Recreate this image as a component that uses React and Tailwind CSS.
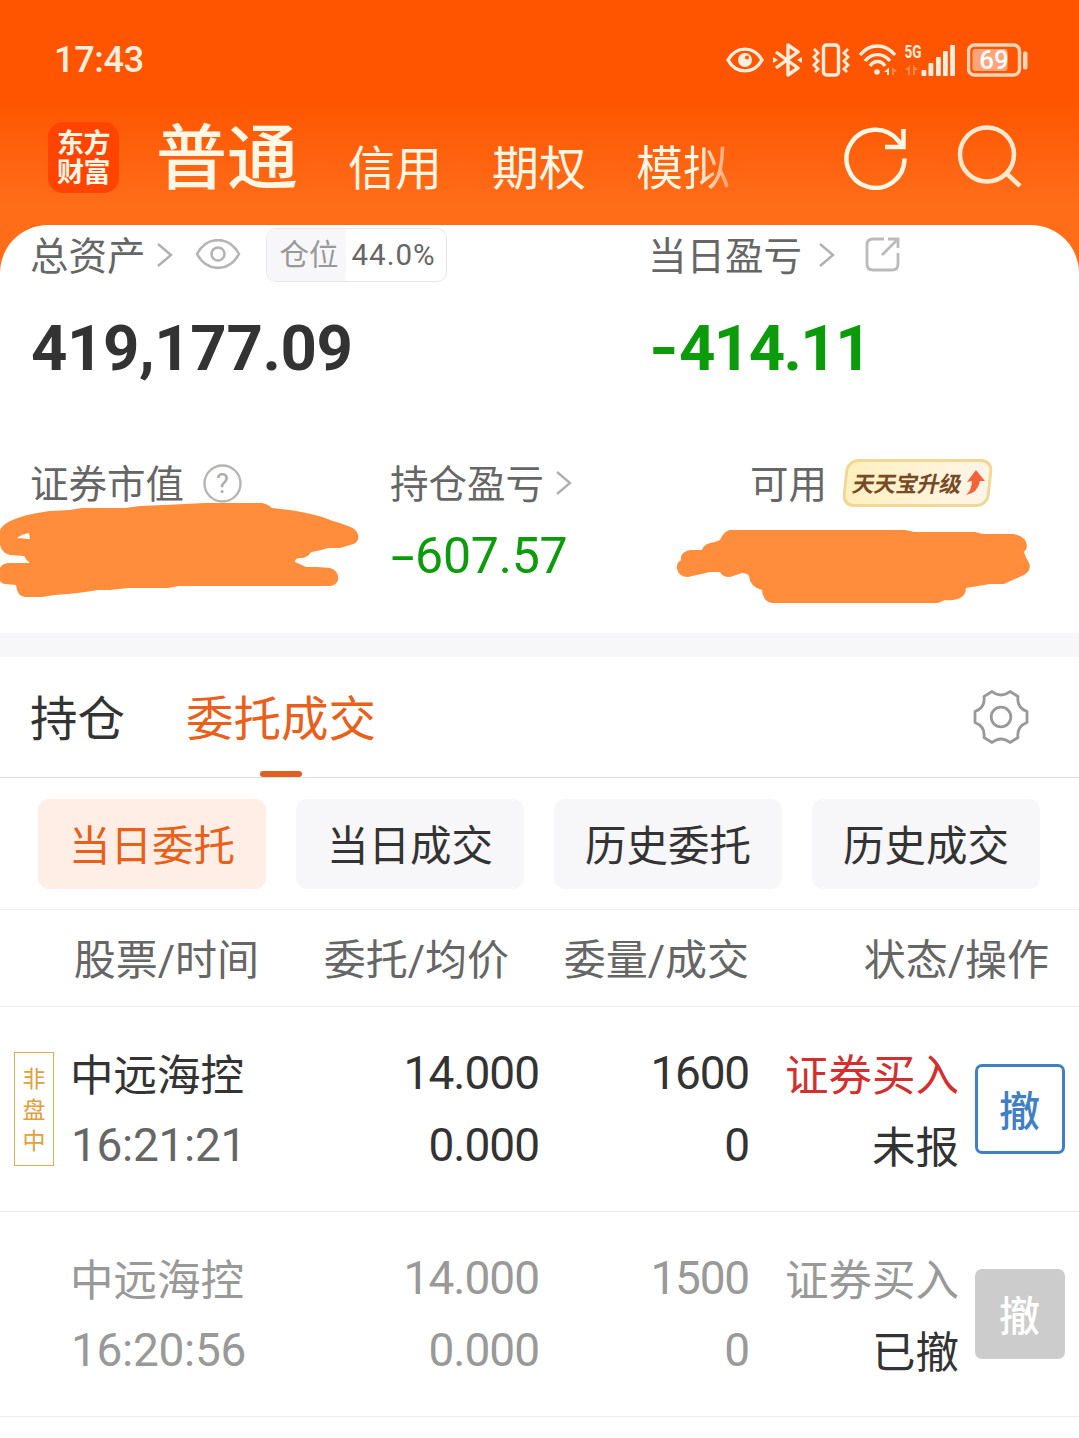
import { useState } from 'react';
import clsx from 'clsx';

const chips = ['当日委托', '当日成交', '历史委托', '历史成交'];

const orders = [
  {
    id: 1,
    tag: '非盘中',
    name: '中远海控',
    time: '16:21:21',
    price: '14.000',
    avg: '0.000',
    amount: '1600',
    filled: '0',
    side: '证券买入',
    status: '未报',
    active: true,
  },
  {
    id: 2,
    name: '中远海控',
    time: '16:20:56',
    price: '14.000',
    avg: '0.000',
    amount: '1500',
    filled: '0',
    side: '证券买入',
    status: '已撤',
    active: false,
  },
];

function Chevron() {
  return (
    <svg width="18" height="26" viewBox="0 0 18 26" fill="none" stroke="#b0b0b0" strokeWidth="2.4">
      <path d="M1 2 L14 13 L1 24" />
    </svg>
  );
}

function StatusBar() {
  return (
    <div className="flex h-[120px] items-center justify-between pl-[54px] pr-[51px] text-[#ffeede]">
      <span className="text-[36px] font-medium leading-none tracking-[-0.300px]">17:43</span>
      <div className="flex items-center">
        {/* eye */}
        <svg width="38" height="26" viewBox="0 0 38 26">
          <path d="M2 13 C10 -1.5 28 -1.5 36 13 C28 27.500 10 27.500 2 13Z" fill="none" stroke="currentColor" strokeWidth="3.400" />
          <circle cx="19" cy="13" r="7" fill="currentColor" />
          <circle cx="21" cy="10.500" r="2" fill="#ff5500" />
        </svg>
        {/* bluetooth */}
        <svg className="ml-[9px]" width="30" height="34" viewBox="0 0 30 34" fill="none" stroke="currentColor" strokeWidth="3.400" strokeLinejoin="round">
          <path d="M3 9 L25 25 L15 32 L15 2 L25 9 L3 25" />
          <path d="M0 14 L5 17 L0 20Z M29 14 L24 17 L29 20Z" fill="currentColor" stroke="none" />
        </svg>
        {/* vibrate */}
        <svg className="ml-[9px]" width="38" height="34" viewBox="0 0 38 34" fill="none" stroke="currentColor" strokeWidth="3.400">
          <rect x="11.500" y="2" width="15" height="30" rx="3" />
          <path d="M2 6 L6 10 L2 14 L6 18 L2 22 L6 26 L3 29 M36 6 L32 10 L36 14 L32 18 L36 22 L32 26 L35 29" strokeWidth="2.8" />
        </svg>
        {/* wifi */}
        <svg className="ml-[9px]" width="40" height="32" viewBox="0 0 40 32" fill="none" stroke="currentColor" strokeWidth="3.400">
          <path d="M1 11 C11 -1 26 -1 36 11" />
          <path d="M6 17 C13 8.500 24 8.500 31 17" />
          <path d="M11 22 C15 16 22 16 26 22" />
          <circle cx="18" cy="28" r="2.800" fill="currentColor" stroke="none" />
          <path d="M25 28 L30 23.500 V31 H28 V28Z" fill="currentColor" stroke="none" />
          <path d="M38 27 L33 23.500 V31 H35 V28Z" fill="currentColor" stroke="none" opacity=".35" />
        </svg>
        {/* signal */}
        <svg className="-mt-[6px] ml-[5px]" width="52" height="40" viewBox="0 -6 52 40" fill="currentColor">
          <text x="0.500" y="15" fontSize="18" fontWeight="700" textLength="17" lengthAdjust="spacingAndGlyphs">5G</text>
          <path d="M1 27 L6 22 V32 H4 V27Z M14 27 L9 22 V32 H11 V27Z" opacity=".35" />
          <rect x="17.500" y="27" width="4.800" height="6" rx="1" />
          <rect x="24.500" y="20" width="4.800" height="13" rx="1" />
          <rect x="32" y="14" width="4.800" height="19" rx="1" />
          <rect x="39" y="8" width="4.800" height="25" rx="1" />
          <rect x="46.200" y="2" width="4.800" height="31" rx="1" />
        </svg>
        {/* battery */}
        <svg className="ml-[11px]" width="61" height="34" viewBox="0 0 61 34">
          <rect x="1.500" y="2" width="51" height="30" rx="6" fill="none" stroke="#ffd5b8" strokeWidth="3.400" />
          <rect x="5.500" y="6" width="35" height="22" rx="3" fill="#ffa37a" />
          <rect x="56" y="8.500" width="4.500" height="18" rx="2" fill="#ffd5b8" />
          <text x="27" y="25.500" fontSize="26" fontWeight="500" textAnchor="middle" fill="#fff">69</text>
        </svg>
      </div>
    </div>
  );
}

function Header() {
  return (
    <header className="h-[285px] bg-[linear-gradient(#ff5500_0px,#ff5500_100px,#ff6d19_205px,#ff6d19_285px)]">
      <StatusBar />
      <div className="flex h-[76px] items-start pl-[48px] text-[#fff6e6]">
        <div className="mt-[2px] h-[71px] w-[71px] rounded-[15px] bg-[#ff4400] pt-[8px] text-center text-[27px] font-bold leading-[29px] tracking-[-0.500px]">
          东方
          <br />
          财富
        </div>
        <span className="ml-[37px] mt-[3px] text-[71px] font-medium leading-[71px]">普通</span>
        <nav className="ml-[50px] mt-[25px] flex gap-[50px] text-[47px] leading-[47px]">
          <span>信用</span>
          <span>期权</span>
          <span className="bg-linear-to-r from-[#fff6e6] from-65% to-[#ff9d64] bg-clip-text text-transparent">模拟</span>
        </nav>
        <svg className="ml-[114px] mt-[6px]" width="64" height="64" viewBox="0 0 64 64" fill="none" stroke="currentColor" strokeWidth="4.500">
          <path d="M60.500 32.500 A29 29 0 1 1 54 14.500 L59 20.500" />
          <path d="M59.500 3 V21 H41" />
        </svg>
        <svg className="ml-[49px] mt-[4px] text-[#ffe8d0]" width="66" height="66" viewBox="0 0 66 66" fill="none" stroke="currentColor" strokeWidth="4.500">
          <circle cx="30" cy="30.500" r="27" />
          <path d="M49 49 L63 62" />
        </svg>
      </div>
    </header>
  );
}

function Summary() {
  return (
    <section className="relative -mt-[60px] h-[408px] rounded-t-[48px] bg-white text-[#666]">
      <div className="flex h-[60px] items-center">
        <div className="flex w-[648px] items-center pl-[30px]">
          <span className="pt-[5px] text-[38.5px] leading-none">总资产</span>
          <span className="ml-[11px]"><Chevron /></span>
          <svg className="ml-[20px]" width="46" height="32" viewBox="0 0 46 32" fill="none" stroke="#b5b5b5" strokeWidth="2.600">
            <path d="M2 15 C12 -3.500 34 -3.500 44 15 C34 33.500 12 33.500 2 15Z" />
            <circle cx="23" cy="15" r="6.500" />
          </svg>
          <div className="ml-[25px] flex h-[54px] w-[181px] overflow-hidden rounded-[10px] border border-[#e8e8ec] text-[29.5px] leading-[52px]">
            <span className="w-[79px] bg-[#f7f7fa] pl-[13px] text-[#999]">仓位</span>
            <span className="pl-[6px] tracking-[1px]">44.0%</span>
          </div>
        </div>
        <span className="pt-[5px] text-[38.5px] leading-none">当日盈亏</span>
        <span className="ml-[17px]"><Chevron /></span>
        <svg className="ml-[28px]" width="36" height="36" viewBox="0 0 36 36" fill="none" stroke="#bbb" strokeWidth="2.800">
          <path d="M19 2 H8 Q2 2 2 8 V27 Q2 33 8 33 H27 Q33 33 33 27 V16" />
          <path d="M17 18 L32 3 M23 2 H33 V11" />
        </svg>
      </div>

      <div className="flex pt-[26px] text-[63.5px] font-bold leading-[76px]">
        <span className="w-[649px] pl-[31px] tracking-[-0.400px] text-[#333]">419,177.09</span>
        <span className="flex tracking-[-1.600px] text-[#0b9b0b]">
          <span className="w-[30px] origin-left scale-x-[1.2]">-</span>
          <span>414.11</span>
        </span>
      </div>

      <div className="flex pt-[71px] text-[38.5px] leading-[50px]">
        <div className="flex w-[390px] items-center pl-[30px]">
          <span className="pt-[4px] leading-[46px]">证券市值</span>
          <svg className="ml-[19px]" width="39" height="39" viewBox="0 0 39 39" fill="none" stroke="#b5b5b5" strokeWidth="2.400">
            <circle cx="19.500" cy="19.500" r="18" />
            <text x="19.500" y="29" fontSize="27" textAnchor="middle" fill="#aaa" stroke="none">?</text>
          </svg>
        </div>
        <div className="flex w-[361px] items-center">
          <span className="pt-[4px] leading-[46px]">持仓盈亏</span>
          <span className="ml-[12px]"><Chevron /></span>
        </div>
        <span className="-ml-[1px] pt-[4px] leading-[46px]">可用</span>
        <div className="ml-[17px] mt-px flex h-[48px] w-[147px] -skew-x-6 items-center rounded-[12px] border-[3px] border-[#f0d894] bg-linear-to-r from-[#fff0bf] to-[#fff5e8] pl-[6px]">
          <span className="-skew-x-6 pt-[3px] text-[22px] font-bold leading-none tracking-[-0.200px] text-[#754a25]">天天宝升级</span>
          <svg className="ml-[3px] skew-x-6" width="20" height="27" viewBox="0 0 20 27">
            <path d="M11 0 L20 11 L15 11 Q13 23 1 25 Q7 20 7 11 L2 12Z" fill="#f4623a" />
          </svg>
        </div>
      </div>

      <div className="flex pl-[391px] pt-[21px] text-[50px] leading-[54px] tracking-[-0.200px] text-[#0b9b0b]">
        <span className="w-[24px] origin-left scale-x-[1.7]">-</span>
        <span>607.57</span>
      </div>

      {/* amounts hidden with a marker */}
      <svg className="absolute left-0 top-[275px]" width="1079" height="110" viewBox="0 500 1079 110" fill="#ff8d3b">
        <path d="M0 531 C2 522 20 515 50 511 L70 510 L82 508 L125 508 L140 506 L165 505 L205 503 L262 503 Q268 504 272 508 L290 510 Q320 515 330 520 Q340 523 348 526 C362 530 361 544 350 545 L340 548 L328 548 Q318 551 311 552 Q308 558 300 558 Q295 558 295 562 Q300 564 306 567 L318 567 L330 568 C341 571 341 585 330 586 L178 586 Q170 588 165 588 L128 588 L110 590 L98 590 Q75 594 55 595 L42 597 L25 597 Q17 596 16 585 L5 584 Q0 583 0 580 L0 568 Q2 563 10 563 L30 563 Q26 560 24 556 L10 555 Q2 553 0 545Z" />
        <path d="M17 538 Q22 534 29 533 L30 539Z" fill="#fff" />
        <path d="M677 569 Q676 563 681 560 Q680 552 690 550 L702 550 Q704 543 715 542 L720 540 Q724 531 730 530 L905 530 L915 532 L975 532 L983 534 L1013 534 Q1026 536 1027 546 Q1027 549 1024 552 Q1025 556 1029 563 Q1032 570 1024 575 L1008 582 L1004 584 L990 584 L966 588 Q966 596 958 599 Q950 601 945 600 L938 603 L772 603 Q763 602 762 590 Q750 587 749 576 Q747 573 742 573 L730 577 Q722 577 720 572 L710 572 L688 577 Q679 577 677 569Z" />
      </svg>
    </section>
  );
}

function OrderRow({ order }) {
  const { active } = order;
  return (
    <div
      className={clsx(
        'grid h-[205px] grid-cols-[70px_180px_290px_209px_210px_1fr] items-center border-b border-[#ececec] leading-[72px]',
        active ? 'text-[#333]' : 'text-[#999]'
      )}
    >
      <div className="pl-[14px]">
        {order.tag && (
          <div className="flex h-[114px] w-[40px] flex-col items-center justify-center border border-[#d9ae55] pt-[2px] text-[23px] leading-[31px] text-[#e0a03c]">
            {order.tag.split('').map((c) => (
              <span key={c}>{c}</span>
            ))}
          </div>
        )}
      </div>
      <div className="whitespace-nowrap">
        <div className="pt-[7px] text-[43.5px] leading-[65px]">{order.name}</div>
        <div className={clsx('pl-px text-[46px] tracking-[-0.300px]', active && 'text-[#666]')}>{order.time}</div>
      </div>
      <div className="pr-px text-right text-[46px] tracking-[-1px]">
        <div>{order.price}</div>
        <div>{order.avg}</div>
      </div>
      <div className="text-right text-[46px] tracking-[-1.200px]">
        <div>{order.amount}</div>
        <div>{order.filled}</div>
      </div>
      <div className="text-right text-[43.5px] leading-[65px]">
        <div className={clsx('pt-[7px]', active && 'text-[#d32f2f]')}>{order.side}</div>
        <div className="pt-[7px] text-[#333]">{order.status}</div>
      </div>
      <button
        className={clsx(
          'ml-[15.500px] h-[90px] w-[90px] rounded-[7px] pt-[6px] text-[41px] font-medium leading-none',
          active ? 'border-[3px] border-[#3f80c4] text-[#3f80c4]' : 'bg-[#ccc] text-white'
        )}
      >
        撤
      </button>
    </div>
  );
}

export default function App() {
  const [chip, setChip] = useState('当日委托');

  return (
    <div className="h-[1438px] w-[1079px] overflow-hidden bg-white font-[Roboto,'Noto_Sans_CJK_SC',sans-serif]">
      <Header />
      <Summary />
      <div className="h-[24px] bg-[#f7f7fa]" />

      <div className="flex h-[121px] justify-between border-b border-[#dedede] pl-[30px] pr-[50px] text-[47.5px] leading-[126px]">
        <div className="flex gap-[61px]">
          <span className="text-[#333]">持仓</span>
          <div className="flex flex-col items-center text-[#e8601a]">
            <span className="h-[114px]">委托成交</span>
            <span className="h-[6px] w-[42px] rounded-full bg-[#df6020]" />
          </div>
        </div>
        <svg className="mt-[32px]" width="56" height="56" viewBox="0 0 56 56" fill="none" stroke="#999" strokeWidth="2.800" strokeLinejoin="round">
          <path d="M19 2.500 Q28 9.500 37 2.500 L45 7.500 Q43.500 18.500 54 22.500 V33.500 Q43.500 37.500 45 48.500 L37 53.500 Q28 46.500 19 53.500 L11 48.500 Q12.500 37.500 2 33.500 V22.500 Q12.500 18.500 11 7.500Z" />
          <circle cx="28" cy="28" r="9.800" />
        </svg>
      </div>

      <div className="flex h-[132px] gap-[30px] border-b border-[#f2f2f2] pl-[38px] pt-[21px]">
        {chips.map((c) => (
          <button
            key={c}
            onClick={() => setChip(c)}
            className={clsx(
              'h-[90px] w-[228px] rounded-[11px] pt-[6px] text-[41.5px] leading-none',
              chip === c ? 'bg-[#ffeee6] text-[#e8601a]' : 'bg-[#f7f7fa] text-[#333]'
            )}
          >
            {c}
          </button>
        ))}
      </div>

      <div className="grid h-[97px] grid-cols-[259px_250px_240px_300px] border-b border-[#ececec] text-right text-[42px] leading-[101px] text-[#666]">
        <span>股票/时间</span>
        <span>委托/均价</span>
        <span>委量/成交</span>
        <span>状态/操作</span>
      </div>

      {orders.map((o) => (
        <OrderRow key={o.id} order={o} />
      ))}
    </div>
  );
}
